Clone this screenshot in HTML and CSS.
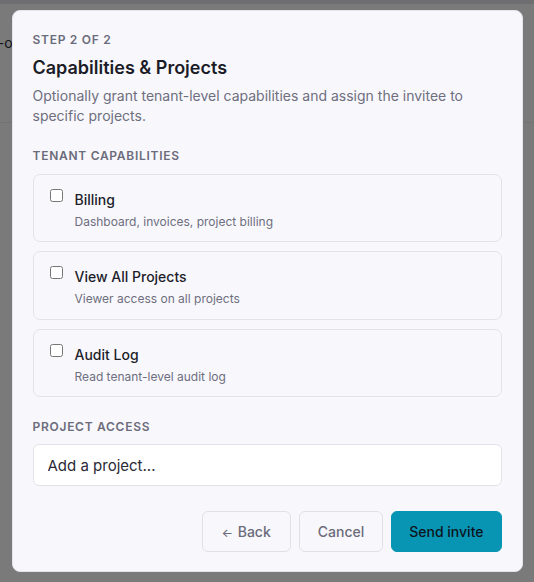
FILE: index.html
```html
<!DOCTYPE html>
<html lang="en">
<head>
    <meta charset="UTF-8">
    <title>Invite member</title>
    <link rel="stylesheet" href="styles.css">
</head>
<body>
<div class="page">
    <div class="page-top"></div>
    <div class="page-header">
        <span class="page-crumb">Add-on</span>
    </div>
</div>
<div class="overlay">
    <div class="modal">
        <div class="step">Step 2 of 2</div>
        <h2 class="modal-title">Capabilities &amp; Projects</h2>
        <p class="modal-desc">Optionally grant tenant-level capabilities and assign the invitee to specific projects.</p>

        <div class="section-label">Tenant capabilities</div>
        <div class="cap-list">
            <label class="cap-card">
                <input type="checkbox">
                <span class="cap-text">
                    <span class="cap-name">Billing</span>
                    <span class="cap-sub">Dashboard, invoices, project billing</span>
                </span>
            </label>
            <label class="cap-card">
                <input type="checkbox">
                <span class="cap-text">
                    <span class="cap-name">View All Projects</span>
                    <span class="cap-sub">Viewer access on all projects</span>
                </span>
            </label>
            <label class="cap-card">
                <input type="checkbox">
                <span class="cap-text">
                    <span class="cap-name">Audit Log</span>
                    <span class="cap-sub">Read tenant-level audit log</span>
                </span>
            </label>
        </div>

        <div class="section-label">Project access</div>
        <input class="project-input" type="text" placeholder="Add a project...">

        <div class="actions">
            <button class="btn btn-ghost btn-back"><span class="arrow">&larr;</span> Back</button>
            <button class="btn btn-ghost">Cancel</button>
            <button class="btn btn-primary">Send invite</button>
        </div>
    </div>
</div>
</body>
</html>
```

FILE: styles.css
```css
* {
    box-sizing: border-box;
}
html, body {
    margin: 0;
    height: 100%;
}
body {
    font-family: Inter, "Noto Sans", sans-serif;
    background: #f4f4f7;
    color: #1e1e2a;
}
.page {
    height: 100%;
}
.page-top {
    height: 4px;
    background: #dcdce0;
}
.page-header {
    height: 119px;
    border-bottom: 1px solid #e6e6ec;
    padding-top: 30px;
    font-size: 14px;
    color: #2a2a35;
}
.page-crumb {
    margin-left: -29px;
}
.overlay {
    position: fixed;
    inset: 0;
    background: rgba(0, 0, 0, 0.5);
    display: flex;
    align-items: center;
    justify-content: center;
}
.modal {
    width: 511px;
    background: #f8f8fc;
    border: 1px solid #e4e4ec;
    border-radius: 8px;
    padding: 20px 20px 19px;
}
.step {
    font-size: 12px;
    line-height: 18px;
    font-weight: 600;
    letter-spacing: 0.06em;
    text-transform: uppercase;
    color: #6b6b7b;
}
.modal-title {
    margin: 6px 0 0;
    font-size: 18px;
    line-height: 26px;
    font-weight: 600;
    color: #1c1c28;
}
.modal-desc {
    margin: 5px 0 0;
    font-size: 14px;
    line-height: 20px;
    color: #6e6e7e;
}
.section-label {
    margin-top: 21px;
    font-size: 12px;
    line-height: 18px;
    font-weight: 600;
    letter-spacing: 0.06em;
    text-transform: uppercase;
    color: #6b6b7b;
}
.cap-list {
    margin-top: 9px;
    display: flex;
    flex-direction: column;
    gap: 9px;
}
.cap-card {
    display: flex;
    align-items: flex-start;
    gap: 12px;
    height: 68.5px;
    padding: 14px 16px 12px;
    border: 1px solid #e2e2ea;
    border-radius: 7px;
    cursor: pointer;
}
.cap-card input {
    margin: 0;
    width: 13px;
    height: 13px;
    flex: none;
}
.cap-text {
    display: flex;
    flex-direction: column;
    gap: 4px;
    margin-top: 1px;
}
.cap-name {
    font-size: 14px;
    line-height: 20px;
    font-weight: 500;
    color: #1e1e2a;
}
.cap-sub {
    font-size: 12px;
    line-height: 16px;
    color: #6e6e7e;
}
.project-input {
    display: block;
    width: 100%;
    height: 42px;
    margin-top: 8px;
    padding: 0 14px;
    border: 1px solid #e2e2ea;
    border-radius: 6px;
    background: #fff;
    font-family: inherit;
    font-size: 15px;
    color: #1e1e2a;
}
.project-input::placeholder {
    color: #2a2a36;
}
.actions {
    margin-top: 25px;
    display: flex;
    justify-content: flex-end;
    gap: 8px;
}
.btn {
    height: 41px;
    padding: 0 18px;
    border-radius: 6px;
    font-family: inherit;
    font-size: 14px;
    font-weight: 500;
    cursor: pointer;
}
.btn-ghost {
    background: #f8f8fc;
    border: 1px solid #e0e0e8;
    color: #6b6b7b;
}
.btn-back {
    padding: 0 19px;
}
.btn-ghost .arrow {
    font-size: 12px;
    margin-right: 1px;
}
.btn-primary {
    background: #0895b3;
    border: 1px solid #0895b3;
    color: #0d1420;
    padding: 0 17px;
}
```
